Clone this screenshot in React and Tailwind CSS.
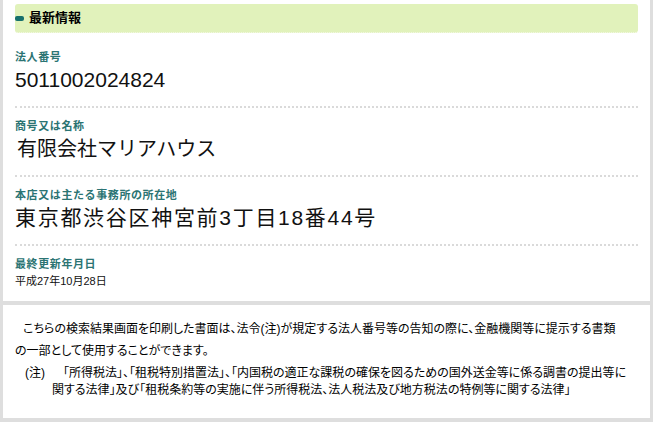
const jp = "font-['Liberation_Sans','Noto_Sans_CJK_JP',sans-serif]";

const Item = ({ label, children, first, last }) => {
    return (
        <div className={`${first ? 'mt-[6px]' : ''} pt-[11px] ${last ? 'pb-[13px]' : 'pb-[14px] border-b-2 border-dotted border-[#dadada]'}`}>
            <p className="text-[11px] leading-[14px] font-bold tracking-[0.6px] text-[#2b7473]">{label}</p>
            {children}
        </div>
    );
};

export default function App() {
    return (
        <div className={`w-[653px] h-[422px] bg-[#dedede] px-[3px] ${jp} text-[#111]`}>
            {/* Latest info panel */}
            <div className="bg-white h-[301px] px-[12px] pt-[4px]">
                <div className="h-[29px] rounded-[3px] bg-[#e1f2bb] border-b border-dotted border-[#f4f9e6] flex items-center">
                    <span className="w-[9px] h-[5px] rounded-[2px] bg-[#16706c]"></span>
                    <span className="ml-[5px] text-[13px] font-bold text-black">最新情報</span>
                </div>

                <Item label="法人番号" first>
                    <p className="mt-[4px] text-[21px] leading-[24px]">5011002024824</p>
                </Item>
                <Item label="商号又は名称">
                    <p className="mt-[4px] text-[20px] leading-[24px] pl-[2px]">有限会社マリアハウス</p>
                </Item>
                <Item label="本店又は主たる事務所の所在地">
                    <p className="mt-[4px] text-[21px] leading-[24px] tracking-[1.7px]">東京都渋谷区神宮前3丁目18番44号</p>
                </Item>
                <Item label="最終更新年月日" last>
                    <p className="mt-[3px] text-[11px] leading-[14px]">平成27年10月28日</p>
                </Item>
            </div>

            {/* Notice panel */}
            <div className="mt-[4px] bg-white h-[113px] px-[12px] pt-[13px] text-[12px] text-black [font-feature-settings:'palt']">
                <p className="leading-[22px] whitespace-nowrap">
                    <span className="pl-[8px]">こちらの検索結果画面を印刷した書面は、法令(注)が規定する法人番号等の告知の際に、金融機関等に提示する書類</span>
                    <br />
                    の一部として使用することができます。
                </p>
                <div className="mt-[3px] leading-[17px] whitespace-nowrap">
                    <div className="flex pl-[10px]">
                        <span className="w-[38px]">(注)</span>
                        <span>「所得税法」、「租税特別措置法」、「内国税の適正な課税の確保を図るための国外送金等に係る調書の提出等に</span>
                    </div>
                    <div className="pl-[37px]">関する法律」及び「租税条約等の実施に伴う所得税法、法人税法及び地方税法の特例等に関する法律」</div>
                </div>
            </div>
        </div>
    );
}
